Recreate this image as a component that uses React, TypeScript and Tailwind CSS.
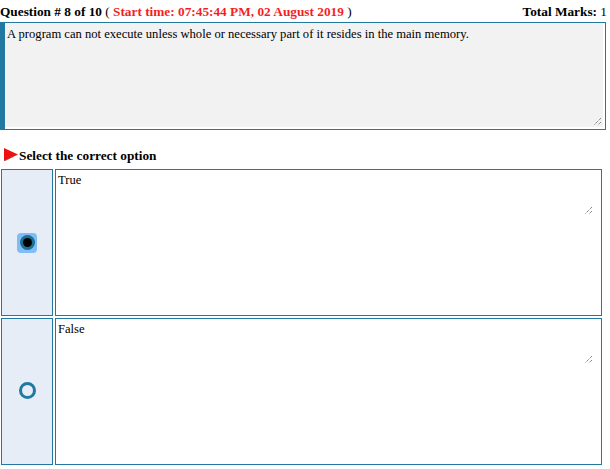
import React from "react";

const teal = "border-[#2178a0]";

function ResizeGrip() {
    return (
        <svg width="9" height="9" viewBox="0 0 9 9" className="absolute">
            <path d="M8 1 L1 8 M8 5 L5 8" stroke="#555" strokeWidth="1" strokeDasharray="1 1" fill="none"/>
        </svg>
    );
}

function Option({label, selected}: { label: string; selected: boolean }) {
    return (
        <div className="flex gap-[2px] h-[147px]">
            <div className={`w-[52px] shrink-0 flex items-center justify-center bg-[#e6edf7] border ${teal}`}>
                {selected ? (
                    <div className="w-[20px] h-[20px] rounded-[4px] bg-[#7fbef5] flex items-center justify-center">
                        <div className="w-[15px] h-[15px] rounded-full bg-[#1d6f93] flex items-center justify-center">
                            <div className="w-[9px] h-[9px] rounded-full bg-black"/>
                        </div>
                    </div>
                ) : (
                    <div className="w-[17px] h-[17px] rounded-full border-[3px] border-[#1f7aa2] -mt-[3px]"/>
                )}
            </div>
            <div className={`w-[547px] border ${teal} bg-white`}>
                <div className="relative h-[47px] px-[2px] pt-[2px] text-[12.6px] leading-[16px]">
                    {label}
                    <div className="absolute right-[8px] bottom-[2px] w-[9px] h-[9px]">
                        <ResizeGrip/>
                    </div>
                </div>
            </div>
        </div>
    );
}

export default function App() {
    return (
        <main className="w-[610px] h-[469px] bg-white text-black font-['Liberation_Serif',serif] overflow-hidden">
            <div className="flex justify-between items-end h-[22px] pb-[2px] text-[13.3px] leading-[16px]">
                <div>
                    <b>Question # 8 of 10</b> ( <b className="text-[#f51f1f]">Start time: 07:45:44 PM, 02 August 2019</b> )
                </div>
                <div className="pr-[3px]">
                    <b>Total Marks:</b> 1
                </div>
            </div>

            <div className={`w-[606px] h-[108px] border ${teal} border-l-[5px] pr-[2px] pb-[2px] bg-white`}>
                <div className="relative h-full bg-[#f2f2f2] px-[2px] pt-[3px] text-[12.6px] leading-[16px]">
                    A program can not execute unless whole or necessary part of it resides in the main memory.
                    <div className="absolute right-[1px] bottom-[1px] w-[9px] h-[9px]">
                        <ResizeGrip/>
                    </div>
                </div>
            </div>

            <div className="flex items-end h-[36px] pl-[4px] pb-[2px] text-[13.3px] leading-[16px] font-bold">
                <svg width="14" height="13" viewBox="0 0 14 13" className="mb-[3px]">
                    <polygon points="0,0 14,6.5 0,13" fill="#ee1111"/>
                    <polygon points="0,13 14,6.5 1,13" fill="#333"/>
                </svg>
                <span className="ml-[1px]">Select the correct option</span>
            </div>

            <div className="flex flex-col gap-[2px] pl-[1px] pt-[3px]">
                <Option label="True" selected={true}/>
                <Option label="False" selected={false}/>
            </div>
        </main>
    );
}
